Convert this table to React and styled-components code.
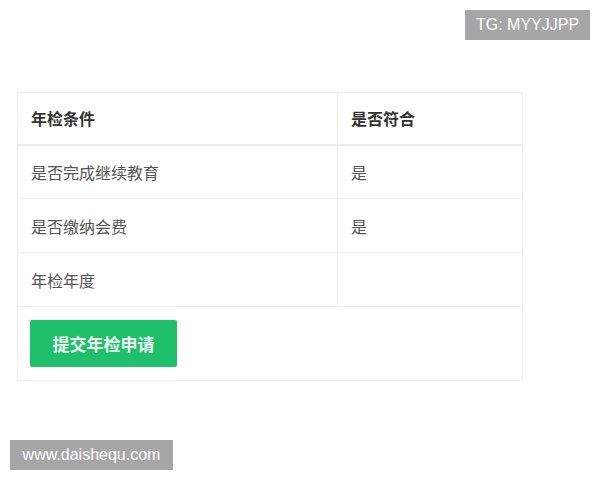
import React from "react";
import styled, { createGlobalStyle } from "styled-components";

const Global = createGlobalStyle`
  html, body { margin: 0; padding: 0; background: #fff; }
  body { font-family: "Liberation Sans", "Noto Sans CJK SC", sans-serif; }
`;

const Page = styled.div`
  position: relative;
  width: 600px;
  height: 480px;
  padding: 92px 0 0 17px;
  box-sizing: border-box;
`;

const Table = styled.table`
  width: 506px;
  border-collapse: collapse;
  border: 1px solid #efefef;
  font-family: "Noto Sans CJK SC", sans-serif;
  font-size: 16px;
`;

const Th = styled.th`
  text-align: left;
  font-weight: 700;
  color: #333;
  height: 52px;
  padding: 0 13px;
  border-bottom: 2px solid #ececec;
  border-right: ${(p) => (p.$last ? "none" : "1px solid #efefef")};
  width: ${(p) => p.$w || "auto"};
  box-sizing: border-box;
`;

const Td = styled.td`
  color: #555;
  height: 54px;
  padding: 0 13px;
  border-top: 1px solid #f1f1f1;
  border-right: ${(p) => (p.$last ? "none" : "1px solid #efefef")};
  box-sizing: border-box;
`;

const ActionCell = styled.td`
  padding: 12px 12px 13px 12px;
  border-top: 1px solid #f1f1f1;
  height: 74px;
  box-sizing: border-box;
`;

const Button = styled.button`
  display: block;
  width: 147px;
  height: 47px;
  border: none;
  border-radius: 2px;
  background: #1fbf6c;
  color: #eefcf4;
  font-family: "Noto Sans CJK SC", sans-serif;
  font-size: 17px;
  font-weight: 700;
  cursor: pointer;
`;

const Watermark = styled.div`
  position: absolute;
  background: #a6a6a6;
  color: #fff;
  font-family: "Liberation Sans", sans-serif;
  font-size: 16px;
  line-height: 30px;
  height: 30px;
  padding: 0 10px;
  ${(p) => p.$pos}
`;

const rows = [
  ["是否完成继续教育", "是"],
  ["是否缴纳会费", "是"],
  ["年检年度", ""],
];

export default function App() {
  return (
    <>
      <Global />
      <Page>
        <Watermark $pos="top: 10px; left: 465px; width: 125px; box-sizing: border-box; text-align: center;">
          TG: MYYJJPP
        </Watermark>
        <Table>
          <thead>
            <tr>
              <Th $w="320px">年检条件</Th>
              <Th $last>是否符合</Th>
            </tr>
          </thead>
          <tbody>
            {rows.map(([a, b]) => (
              <tr key={a}>
                <Td>{a}</Td>
                <Td $last>{b}</Td>
              </tr>
            ))}
            <tr>
              <ActionCell colSpan={2}>
                <Button>提交年检申请</Button>
              </ActionCell>
            </tr>
          </tbody>
        </Table>
        <Watermark $pos="top: 440px; left: 10px; width: 163px; box-sizing: border-box; text-align: center;">
          www.daishequ.com
        </Watermark>
      </Page>
    </>
  );
}
